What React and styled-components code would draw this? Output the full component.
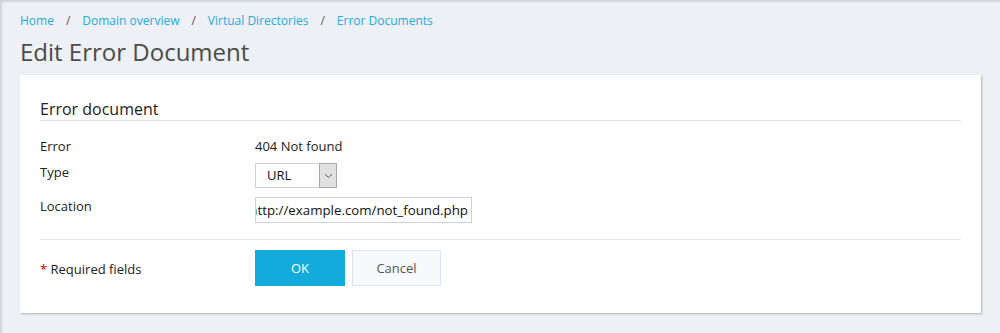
import React from 'react';
import styled, { createGlobalStyle } from 'styled-components';

const GlobalStyle = createGlobalStyle`
  html, body {
    margin: 0;
    padding: 0;
    background: #edf0f4;
    font-family: "Open Sans", "Noto Sans", sans-serif;
    font-size: 13px;
    color: #333;
  }
`;

const Page = styled.div`
  min-height: 333px;
  box-sizing: border-box;
  padding: 10px 19px 20px 20px;
  box-shadow: inset 2px 2px 2px rgba(0, 0, 0, 0.12);
`;

const Breadcrumbs = styled.nav`
  display: flex;
  align-items: center;
  height: 20px;
  font-size: 12px;
`;

const Crumb = styled.a`
  color: #28a9e1;
  text-decoration: none;
`;

const Sep = styled.span`
  color: #555;
  margin: 0 12px;
`;

const Title = styled.h1`
  margin: 5px 0 6px;
  font-size: 24px;
  font-weight: 400;
  line-height: 34px;
  color: #4b4b4b;
`;

const Card = styled.section`
  background: #fff;
  padding: 24px 20px 27px;
  box-shadow: 1px 1px 2px rgba(0, 0, 0, 0.25);
`;

const CardTitle = styled.h2`
  margin: 0;
  padding-bottom: 1px;
  font-size: 16px;
  font-weight: 400;
  line-height: 20px;
  color: #222;
  border-bottom: 1px solid #dfe0e6;
`;

const Fields = styled.div`
  padding: 16px 0 16px;
  border-bottom: 1px solid #e6e6e6;
`;

const Row = styled.div`
  display: grid;
  grid-template-columns: 215px 1fr;
  align-items: start;
  min-height: ${p => p.$h}px;
`;

const Label = styled.span`
  color: #222;
  line-height: 18px;
`;

const Value = styled.span`
  color: #222;
  line-height: 18px;
`;

const Select = styled.div`
  display: flex;
  width: 82px;
  height: 25px;
  box-sizing: border-box;
  border: 1px solid #ccd0d8;
  background: #fff;
`;

const SelectText = styled.span`
  flex: 1;
  padding-left: 11px;
  line-height: 23px;
  color: #111;
`;

const SelectArrow = styled.span`
  width: 16px;
  display: flex;
  align-items: center;
  justify-content: center;
  background: #e1e1e1;
  border: 1px solid #a9a9a9;
  margin: -1px -1px -1px 0;
`;

const Input = styled.div`
  display: flex;
  justify-content: flex-end;
  width: 217px;
  height: 26px;
  box-sizing: border-box;
  border: 1px solid #ccd0d8;
  padding: 0 3px 0 4px;
  overflow: hidden;
  white-space: nowrap;
  font-size: 13.3px;
  line-height: 24px;
  color: #111;
`;

const Actions = styled.div`
  display: grid;
  grid-template-columns: 215px auto;
  align-items: center;
  padding-top: 10px;
`;

const Req = styled.span`
  color: #222;
  padding-top: 2px;
`;

const Star = styled.span`
  color: #c00;
`;

const Buttons = styled.div`
  display: flex;
  gap: 7px;
`;

const Button = styled.button`
  width: ${p => p.$w}px;
  height: 36px;
  font-family: inherit;
  font-size: 13px;
  border: 1px solid ${p => (p.$primary ? '#13aadc' : '#dfe2e8')};
  background: ${p => (p.$primary ? '#13aadc' : '#f8f9fb')};
  color: ${p => (p.$primary ? '#fff' : '#555')};
  padding: 0;
  cursor: pointer;
`;

export default function App() {
  return (
    <>
      <GlobalStyle />
      <Page>
        <Breadcrumbs>
          <Crumb href="#">Home</Crumb>
          <Sep>/</Sep>
          <Crumb href="#">Domain overview</Crumb>
          <Sep>/</Sep>
          <Crumb href="#">Virtual Directories</Crumb>
          <Sep>/</Sep>
          <Crumb href="#">Error Documents</Crumb>
        </Breadcrumbs>
        <Title>Edit Error Document</Title>
        <Card>
          <CardTitle>Error document</CardTitle>
          <Fields>
            <Row $h={26}>
              <Label>Error</Label>
              <Value>404 Not found</Value>
            </Row>
            <Row $h={34}>
              <Label>Type</Label>
              <Select>
                <SelectText>URL</SelectText>
                <SelectArrow>
                  <svg width="9" height="6" viewBox="0 0 9 6">
                    <path d="M1 1l3.5 3.5L8 1" fill="none" stroke="#555" strokeWidth="1" />
                  </svg>
                </SelectArrow>
              </Select>
            </Row>
            <Row $h={26}>
              <Label>Location</Label>
              <Input>
                <span>http://example.com/not_found.php</span>
              </Input>
            </Row>
          </Fields>
          <Actions>
            <Req>
              <Star>*</Star> Required fields
            </Req>
            <Buttons>
              <Button $primary $w={90}>OK</Button>
              <Button $w={89}>Cancel</Button>
            </Buttons>
          </Actions>
        </Card>
      </Page>
    </>
  );
}
